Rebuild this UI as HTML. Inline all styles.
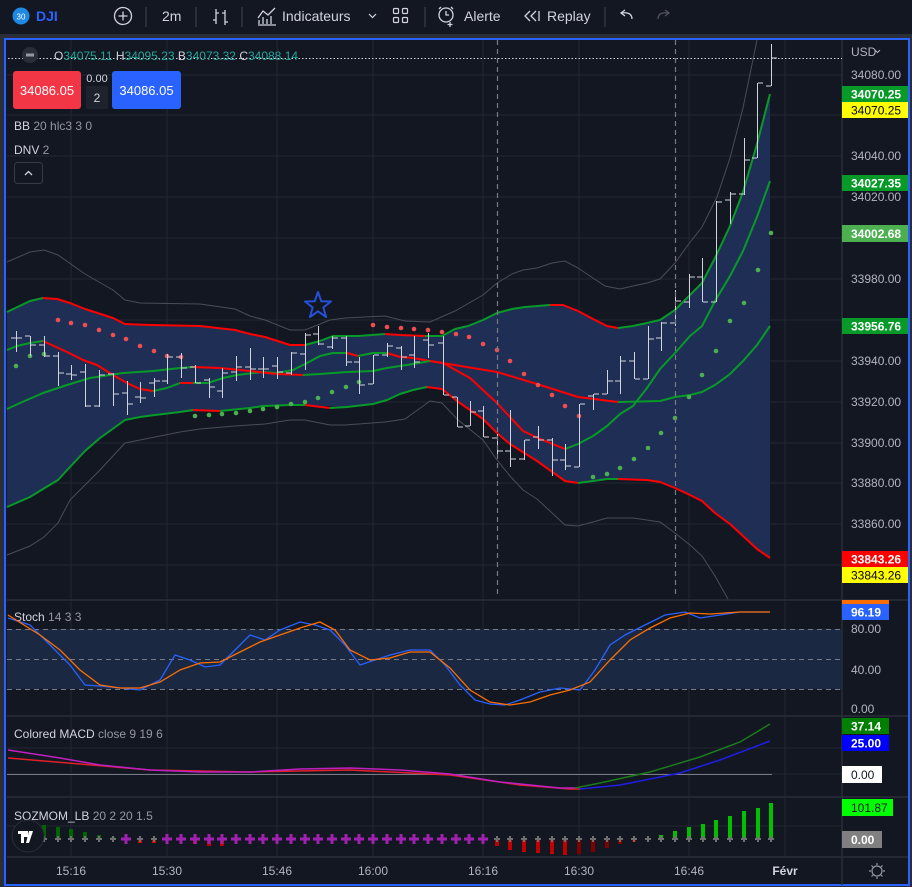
<!DOCTYPE html>
<html><head><meta charset="utf-8"><style>
html,body{margin:0;padding:0;background:#2a2e39;}
svg{display:block;font-family:"Liberation Sans",sans-serif;}
</style></head><body>
<svg width="912" height="887" viewBox="0 0 912 887" xmlns="http://www.w3.org/2000/svg">
<rect x="0" y="0" width="912" height="887" fill="#2a2e39"/>
<!-- toolbar -->
<rect x="0" y="0" width="912" height="34" fill="#131722"/>
<circle cx="21" cy="16" r="8.5" fill="#1e88e5"/>
<text x="21" y="19.5" font-size="8" fill="#fff" text-anchor="middle">30</text>
<text x="36" y="21" font-size="14" font-weight="bold" fill="#2962ff">DJI</text>
<circle cx="123" cy="16" r="8.5" fill="none" stroke="#d1d4dc" stroke-width="1.3"/>
<path d="M123 11.5V20.5M118.5 16H127.5" stroke="#d1d4dc" stroke-width="1.3"/>
<g stroke="#434651"><path d="M146 7V27M196 7V27M242 7V27M425 7V27M605 7V27"/></g>
<text x="162" y="21" font-size="14" fill="#d1d4dc">2m</text>
<path d="M216 9V24M216 13H219M216 20H213M225 10V25M225 13H222M225 22H228" stroke="#d1d4dc" stroke-width="1.3" fill="none"/>
<path d="M258 18L263 11L268 15L275 8M259 24V20M263 24V17M267 24V19M271 24V16M258 25H276" stroke="#d1d4dc" stroke-width="1.3" fill="none"/>
<text x="282" y="21" font-size="14" fill="#d1d4dc">Indicateurs</text>
<path d="M369 14L372.5 17.5L376 14" stroke="#d1d4dc" stroke-width="1.2" fill="none"/>
<g fill="none" stroke="#d1d4dc" stroke-width="1.2"><rect x="393.5" y="8.5" width="5" height="5" rx="1"/><rect x="402.5" y="8.5" width="5" height="5" rx="1"/><rect x="393.5" y="17.5" width="5" height="5" rx="1"/><rect x="402.5" y="17.5" width="5" height="5" rx="1"/></g>
<circle cx="446" cy="15" r="7" fill="none" stroke="#d1d4dc" stroke-width="1.3"/>
<path d="M446 11V15H449M439 9L441 7M453 9L451 7M450 22V27M447.5 24.5H452.5" stroke="#d1d4dc" stroke-width="1.3" fill="none"/>
<text x="464" y="21" font-size="14" fill="#d1d4dc">Alerte</text>
<path d="M530 11L525 16L530 21M536 11L531 16L536 21M539 11V21" stroke="#d1d4dc" stroke-width="1.3" fill="none"/>
<text x="547" y="21" font-size="14" fill="#d1d4dc">Replay</text>
<path d="M632 19C632 14 628 12 622 13M625 10L621 13L625 16" stroke="#d1d4dc" stroke-width="1.3" fill="none"/>
<path d="M658 19C658 14 662 12 668 13M665 10L669 13L665 16" stroke="#50535e" stroke-width="1.3" fill="none"/>

<!-- chart container -->
<rect x="5" y="39" width="904" height="846" fill="#131722" stroke="#2962ff" stroke-width="2"/>
<!-- grid -->
<g stroke="#232733" stroke-width="1">
<path d="M7 75H842M7 115H842M7 156H842M7 197H842M7 238H842M7 279H842M7 320H842M7 361H842M7 402H842M7 443H842M7 483H842M7 524H842M7 565H842"/>
<path d="M71 40V857M167 40V857M277 40V857M373 40V857M483 40V857M579 40V857M689 40V857M785 40V857"/>
<path d="M7 659H842M7 748H842M7 774H842M7 826H842"/>
</g>
<!-- pane separators -->
<g stroke="#2a2e39" stroke-width="1.5"><path d="M7 600H908M7 716H908M7 797H908M7 857H908M842 40V885"/></g>

<!-- fill -->
<path d="M7 312L30 301L43 298L57 299L70 303L85 309L113 318L125 324L150 325L200 326L235 330L250 334L265 337L290 345L305 345L320 341L333 336L358 336L385 334L430 336L442 336L455 329L468 326L483 320L497 313L512 309L525 307L550 305L563 305L578 311L593 319L607 326L618 328L633 326L647 323L660 320L675 310L690 295L702 283L715 258L730 226L743 192L757 144L770 94L770 558L757 549L743 536L730 524L715 513L702 501L690 495L675 488L660 482L647 480L618 479L593 481L578 483L565 481L537 461L510 444L497 433L483 419L457 401L442 389L430 388L413 390L400 394L387 400L373 404L347 407L305 405L263 406L220 411L180 412L140 417L125 420L100 438L85 451L70 467L58 480L43 489L30 497L7 507Z" fill="#1f2e55"/>
<!-- gray outer bands -->
<g fill="none" stroke="#4a4d56" stroke-width="1">
<path d="M7 262L30 252L44 250L58 255L85 274L113 290L125 300L140 303L200 304L235 309L250 316L265 320L290 330L305 330L330 320L345 318L385 316L405 321L430 322L455 311L483 295L497 283L512 274L523 270L537 268L552 263L565 261L578 268L593 278L605 286L620 289L633 286L647 283L660 279L675 263L688 245L702 227L717 197L730 158L743 108L757 40"/>
<path d="M7 555L30 546L44 537L58 523L70 500L85 485L100 470L125 443L140 440L165 435L180 432L200 429L235 426L265 424L290 420L305 420L330 425L345 425L385 422L405 419L430 401L442 403L457 419L483 440L497 460L510 476L523 490L537 499L550 511L565 525L578 526L593 522L607 518L633 518L660 522L675 533L690 545L702 556L715 576L728 599"/>
</g>
<!-- colored lines -->
<g fill="none" stroke-width="2" stroke-linejoin="round">
<!-- upper band -->
<path stroke="#089a28" d="M7 312L30 301L43 298"/>
<path stroke="#f00" d="M43 298L57 299L70 303L85 309L113 318L125 324L150 325L200 326L235 330L250 334L265 337L290 345L305 345"/>
<path stroke="#089a28" d="M305 345L320 341L333 336L358 336L385 334"/>
<path stroke="#f00" d="M385 334L400 335L425 336"/>
<path stroke="#089a28" d="M425 336L442 336L455 329L468 326L483 320L497 313L512 309L525 307L550 305"/>
<path stroke="#f00" d="M550 305L563 305L578 311L593 319L607 326L618 328"/>
<path stroke="#089a28" d="M618 328L633 326L647 323L660 320L675 310L690 295L702 283L715 258L730 226L743 192L757 144L770 94"/>
<!-- middle-upper -->
<path stroke="#089a28" d="M7 350L17 346L30 343L43 341"/>
<path stroke="#f00" d="M43 341L67 352L83 360L97 365L113 375L127 383L140 389L153 391"/>
<path stroke="#089a28" d="M153 391L167 388L180 383"/>
<path stroke="#f00" d="M180 383L193 383"/>
<path stroke="#089a28" d="M193 383L208 383L223 378L237 375L263 372L277 373L293 370L307 363L320 356L333 353L347 353"/>
<path stroke="#f00" d="M347 353L358 356"/>
<path stroke="#089a28" d="M358 356L373 353L387 353"/>
<path stroke="#f00" d="M387 353L400 357L413 358L430 361L443 363L470 378L497 403L523 431L538 438L565 449"/>
<path stroke="#089a28" d="M565 449L578 444L593 436L607 426L620 414L633 406L647 388L660 369L675 353L690 336L702 326L715 301L730 276L743 251L757 217L770 181"/>
<!-- basis -->
<path stroke="#089a28" d="M7 409L20 403L43 393L67 385L90 378L110 375L123 373L153 371L180 368L193 367"/>
<path stroke="#f00" d="M193 367L220 368L250 371L277 374L303 375"/>
<path stroke="#089a28" d="M303 375L320 374L347 372L373 371L387 368L400 366L413 364L430 361"/>
<path stroke="#f00" d="M430 361L497 372L537 384L578 397L618 402"/>
<path stroke="#089a28" d="M618 402L660 401L675 397L690 395L702 392L715 385L730 374L743 361L757 345L770 326"/>
<!-- lower -->
<path stroke="#089a28" d="M7 507L30 497L43 489L58 480L70 467L85 451L100 438L125 420L140 417L155 415L180 412L193 410"/>
<path stroke="#f00" d="M193 410L220 411"/>
<path stroke="#089a28" d="M220 411L250 408L263 406L290 405L305 405"/>
<path stroke="#f00" d="M305 405L330 408"/>
<path stroke="#089a28" d="M330 408L347 407L373 404L387 400L400 394L413 390L427 387"/>
<path stroke="#f00" d="M427 387L442 389L457 401L483 419L497 433L510 444L537 461L565 481L578 483"/>
<path stroke="#089a28" d="M578 483L593 481L607 479L618 479"/>
<path stroke="#f00" d="M618 479L647 480L660 482L675 488L690 495L702 501L715 513L730 524L743 536L757 549L770 558"/>
</g>
<!-- SAR dots -->
<g fill="#f04e4e">
<circle cx="58" cy="320" r="2.3"/><circle cx="71" cy="323" r="2.3"/><circle cx="85" cy="325" r="2.3"/><circle cx="99" cy="330" r="2.3"/><circle cx="113" cy="335" r="2.3"/><circle cx="126" cy="339" r="2.3"/><circle cx="140" cy="346" r="2.3"/><circle cx="154" cy="351" r="2.3"/><circle cx="167" cy="356" r="2.3"/><circle cx="181" cy="357" r="2.3"/>
<circle cx="373" cy="325" r="2.3"/><circle cx="387" cy="327" r="2.3"/><circle cx="401" cy="328" r="2.3"/><circle cx="414" cy="329" r="2.3"/><circle cx="428" cy="330" r="2.3"/><circle cx="442" cy="332" r="2.3"/><circle cx="456" cy="334" r="2.3"/><circle cx="469" cy="337" r="2.3"/><circle cx="483" cy="344" r="2.3"/><circle cx="497" cy="350" r="2.3"/><circle cx="510" cy="361" r="2.3"/><circle cx="524" cy="374" r="2.3"/><circle cx="538" cy="385" r="2.3"/><circle cx="552" cy="395" r="2.3"/><circle cx="565" cy="406" r="2.3"/><circle cx="579" cy="416" r="2.3"/>
</g>
<g fill="#4caf50">
<circle cx="16" cy="366" r="2.3"/><circle cx="30" cy="356" r="2.3"/><circle cx="44" cy="354" r="2.3"/>
<circle cx="195" cy="416" r="2.3"/><circle cx="209" cy="415" r="2.3"/><circle cx="222" cy="414" r="2.3"/><circle cx="236" cy="413" r="2.3"/><circle cx="250" cy="411" r="2.3"/><circle cx="263" cy="409" r="2.3"/><circle cx="277" cy="407" r="2.3"/><circle cx="291" cy="404" r="2.3"/><circle cx="305" cy="402" r="2.3"/><circle cx="318" cy="398" r="2.3"/><circle cx="332" cy="392" r="2.3"/><circle cx="346" cy="387" r="2.3"/><circle cx="359" cy="382" r="2.3"/>
<circle cx="593" cy="477" r="2.3"/><circle cx="607" cy="474" r="2.3"/><circle cx="620" cy="468" r="2.3"/><circle cx="634" cy="459" r="2.3"/><circle cx="648" cy="448" r="2.3"/><circle cx="661" cy="433" r="2.3"/><circle cx="675" cy="418" r="2.3"/><circle cx="689" cy="397" r="2.3"/><circle cx="702" cy="375" r="2.3"/><circle cx="716" cy="351" r="2.3"/><circle cx="730" cy="321" r="2.3"/><circle cx="744" cy="303" r="2.3"/><circle cx="758" cy="270" r="2.3"/><circle cx="771" cy="233" r="2.3"/>
</g>
<!-- OHLC bars -->
<path fill="none" stroke="#d1d4dc" stroke-width="1" d="
M16.5 331V352M11 338H16M17 338H22
M30.5 336V356M25 336H30M31 345H36
M44.5 336V357M39 345H44M45 356H50
M58.5 352V386M53 356H58M59 373H64
M71.5 365V380M66 374H71M72 375H77
M85.5 364V407M80 372H85M86 406H91
M99.5 370V407M94 406H99M100 375H105
M113.5 373V406M108 374H113M114 394H119
M127.5 381V415M122 393H127M128 404H133
M140.5 382V403M135 397H140M141 398H146
M154.5 378V397M149 383H154M155 381H160
M167.5 354V384M162 381H167M168 357H173
M181.5 353V378M176 357H181M182 368H187
M195.5 365V383M190 367H195M196 383H201
M209.5 378V398M204 380H209M210 387H215
M222.5 368V398M217 391H222M223 373H228
M236.5 356V381M231 372H236M237 367H242
M250.5 348V380M245 367H250M251 369H256
M263.5 357V378M258 369H263M264 369H269
M277.5 357V379M272 366H277M278 372H283
M291.5 352V375M286 373H291M292 353H297
M305.5 333V370M300 354H305M306 335H311
M318.5 326V345M313 334H318M319 344H324
M332.5 336V349M327 347H332M333 338H338
M346.5 336V366M341 338H346M347 362H352
M359.5 357V394M354 362H359M360 385H365
M373.5 355V384M368 384H373M374 355H379
M387.5 343V357M382 355H387M388 346H393
M401.5 346V370M396 348H401M402 357H407
M414.5 336V368M409 355H414M415 362H420
M428.5 333V358M423 340H428M429 345H434
M443.5 336V395M438 343H443M444 395H449
M457.5 397V427M452 397H457M458 427H463
M470.5 401V426M465 426H470M471 412H476
M483.5 406V437M478 411H483M484 437H489
M497.5 434V456M492 438H497M498 451H503
M510.5 410V467M505 451H510M511 459H516
M524.5 440V460M519 459H524M525 440H530
M538.5 426V449M533 437H538M539 440H544
M552.5 438V476M547 440H552M553 460H558
M565.5 444V470M560 460H565M566 466H571
M579.5 404V467M574 467H579M580 404H585
M593.5 394V410M588 396H593M594 394H599
M607.5 370V394M602 394H607M608 381H613
M620.5 356V394M615 381H620M621 361H626
M634.5 352V379M629 361H634M635 379H640
M648.5 326V379M643 379H648M649 339H654
M661.5 322V351M656 338H661M662 323H667
M675.5 290V326M670 323H675M676 301H681
M689.5 274V308M684 302H689M690 277H695
M702.5 258V302M697 277H702M703 302H708
M716.5 201V302M711 302H716M717 202H722
M730.5 192V224M725 200H730M731 194H736
M744.5 138V195M739 194H744M745 160H750
M757.5 83V158M752 158H757M758 83H763
M771.5 44V86M766 86H771M772 58H777"/>
<!-- dashed verticals -->
<path d="M497.5 40V597M675.5 40V597" stroke="#787b86" stroke-width="1.2" stroke-dasharray="5,4"/>
<!-- dotted crosshair -->
<path d="M8 58.5H842" stroke="#d1d4dc" stroke-width="1" stroke-dasharray="1.5,2"/>
<!-- star -->
<path d="M318 292L321.3 301.3L331 301.5L323.3 307.5L326.1 317L318 311.3L309.9 317L312.7 307.5L305 301.5L314.7 301.3Z" fill="none" stroke="#2451d6" stroke-width="2" stroke-linejoin="round"/>

<!-- header legend -->
<circle cx="30" cy="55" r="8" fill="#2a2e39"/>
<rect x="26" y="53.5" width="8" height="3" fill="#9598a1"/>
<text y="60" font-size="12"><tspan x="54" fill="#d1d4dc">O</tspan><tspan fill="#26a69a">34075.11</tspan><tspan fill="#d1d4dc"> H</tspan><tspan fill="#26a69a">34095.23</tspan><tspan fill="#d1d4dc"> B</tspan><tspan fill="#26a69a">34073.32</tspan><tspan fill="#d1d4dc"> C</tspan><tspan fill="#26a69a">34088.14</tspan></text>
<rect x="13" y="71" width="68" height="38" rx="3" fill="#f23645"/>
<text x="47" y="95" font-size="13" fill="#fff" text-anchor="middle">34086.05</text>
<text x="97" y="82" font-size="11" fill="#d1d4dc" text-anchor="middle">0.00</text>
<rect x="86" y="86" width="22" height="23" rx="2" fill="#1e222d"/>
<text x="97" y="102" font-size="12" fill="#d1d4dc" text-anchor="middle">2</text>
<rect x="112" y="71" width="69" height="38" rx="3" fill="#2962ff"/>
<text x="146.5" y="95" font-size="13" fill="#fff" text-anchor="middle">34086.05</text>
<text x="14" y="130" font-size="12" fill="#d1d4dc">BB <tspan fill="#9598a1">20 hlc3 3 0</tspan></text>
<text x="14" y="154" font-size="12" fill="#d1d4dc">DNV <tspan fill="#9598a1">2</tspan></text>
<rect x="14.5" y="162.5" width="28" height="21" rx="3" fill="#131722" stroke="#363a45"/>
<path d="M25 175L28.5 171.5L32 175" stroke="#d1d4dc" stroke-width="1.3" fill="none"/>

<!-- price axis -->
<g font-size="12" fill="#b2b5be">
<text x="851" y="56">USD</text>
<path d="M875 50L877.5 52.5L880 50" stroke="#b2b5be" fill="none"/>
<text x="851" y="79">34080.00</text>
<text x="851" y="160">34040.00</text>
<text x="851" y="201">34020.00</text>
<text x="851" y="283">33980.00</text>
<text x="851" y="365">33940.00</text>
<text x="851" y="406">33920.00</text>
<text x="851" y="447">33900.00</text>
<text x="851" y="487">33880.00</text>
<text x="851" y="528">33860.00</text>
</g>
<rect x="842" y="86" width="66" height="16" fill="#089a28"/><text x="851" y="98.5" font-size="12" font-weight="bold" fill="#fff">34070.25</text>
<rect x="842" y="102" width="66" height="16" fill="#ffff00"/><text x="851" y="114.5" font-size="12" fill="#000">34070.25</text>
<rect x="842" y="175" width="66" height="16" fill="#089a28"/><text x="851" y="187.5" font-size="12" font-weight="bold" fill="#fff">34027.35</text>
<rect x="842" y="225" width="66" height="17" fill="#4caf50"/><text x="851" y="238" font-size="12" font-weight="bold" fill="#fff">34002.68</text>
<rect x="842" y="318" width="66" height="16" fill="#089a28"/><text x="851" y="330.5" font-size="12" font-weight="bold" fill="#fff">33956.76</text>
<rect x="842" y="551" width="66" height="16" fill="#ff0000"/><text x="851" y="563.5" font-size="12" font-weight="bold" fill="#fff">33843.26</text>
<rect x="842" y="567" width="66" height="16" fill="#ffff00"/><text x="851" y="579.5" font-size="12" fill="#000">33843.26</text>

<!-- Stoch pane -->
<rect x="7" y="629" width="835" height="60" fill="#1c2a45" opacity="0.9"/>
<path d="M7 629.5H842M7 659.5H842M7 689.5H842" stroke="#787b86" stroke-dasharray="5,4"/>
<text x="14" y="621" font-size="12" fill="#d1d4dc">Stoch <tspan fill="#9598a1">14 3 3</tspan></text>
<path fill="none" stroke="#2962ff" stroke-width="1.3" d="M8 618L30 625L50 645L70 665L85 685L100 686L120 688L140 690L160 680L175 655L190 660L205 667L220 665L235 650L250 635L265 640L280 630L300 622L315 625L330 630L345 645L360 665L375 660L390 655L410 650L430 650L445 665L460 685L475 700L490 704L505 705L520 700L540 692L560 688L580 690L595 670L610 645L625 635L645 625L665 615L685 612L700 618L720 615L740 612L770 612"/>
<path fill="none" stroke="#ff6d00" stroke-width="1.3" d="M8 615L40 635L60 650L80 670L100 685L120 688L140 688L160 682L180 670L200 663L220 662L240 652L260 642L280 635L300 628L320 622L335 630L350 650L370 660L390 658L410 652L430 652L450 668L470 690L490 702L510 705L530 702L550 695L570 690L590 682L610 660L630 640L650 628L670 618L690 613L710 614L740 612L770 612"/>
<rect x="842" y="600" width="47" height="4" fill="#ff6d00"/>
<rect x="842" y="604" width="47" height="16" fill="#2962ff"/><text x="851" y="616.5" font-size="12" font-weight="bold" fill="#fff">96.19</text>
<g font-size="12" fill="#b2b5be"><text x="851" y="633">80.00</text><text x="851" y="674">40.00</text><text x="851" y="713">0.00</text></g>

<!-- MACD pane -->
<text x="14" y="738" font-size="12" fill="#d1d4dc">Colored MACD <tspan fill="#9598a1">close 9 19 6</tspan></text>
<path d="M7 774.5H772" stroke="#787b86"/>
<path fill="none" stroke="#e0202a" stroke-width="1.5" d="M8 758L80 764L150 770L250 772L350 770L450 775L520 785L570 789L580 789"/>
<path fill="none" stroke="#1e1ee6" stroke-width="1.5" d="M580 789L620 785L680 773L720 760L770 741"/>
<path fill="none" stroke="#c020c0" stroke-width="1.5" d="M8 750L60 758L100 765L150 770L200 772L250 772L300 769L350 768L400 770L450 774L500 782L560 788L575 788"/>
<path fill="none" stroke="#1b7a1b" stroke-width="1.5" d="M575 788L600 783L650 772L700 757L740 742L770 724"/>
<rect x="842" y="718" width="47" height="16" fill="#008000"/><text x="851" y="730.5" font-size="12" font-weight="bold" fill="#fff">37.14</text>
<rect x="842" y="735" width="47" height="16" fill="#0000ff"/><text x="851" y="747.5" font-size="12" font-weight="bold" fill="#fff">25.00</text>
<rect x="842" y="766" width="40" height="17" fill="#fff"/><text x="851" y="779" font-size="12" fill="#131722">0.00</text>

<!-- SQZ pane -->
<text x="14" y="820" font-size="12" fill="#d1d4dc">SQZMOM_LB <tspan fill="#9598a1">20 2 20 1.5</tspan></text>
<g fill="#006400">
<rect x="42" y="825" width="4" height="14"/><rect x="56" y="827" width="4" height="12"/><rect x="69" y="829" width="4" height="10"/><rect x="83" y="832" width="4" height="7"/><rect x="97" y="835" width="4" height="4"/><rect x="111" y="837" width="4" height="2"/>
</g>
<g fill="#c00000"><rect x="138" y="839" width="4" height="4"/><rect x="152" y="839" width="4" height="4"/><rect x="193" y="839" width="4" height="5"/><rect x="207" y="839" width="4" height="7"/><rect x="220" y="839" width="4" height="7"/>
<rect x="495" y="839" width="4" height="7"/><rect x="508" y="839" width="4" height="11"/><rect x="522" y="839" width="4" height="13"/><rect x="536" y="839" width="4" height="14"/><rect x="550" y="839" width="4" height="15"/><rect x="563" y="839" width="4" height="16"/></g>
<g fill="#800000"><rect x="577" y="839" width="4" height="15"/><rect x="591" y="839" width="4" height="13"/><rect x="605" y="839" width="4" height="9"/><rect x="618" y="839" width="4" height="5"/><rect x="632" y="839" width="4" height="3"/></g>
<g fill="#00c000"><rect x="659" y="835" width="4" height="4"/><rect x="673" y="831" width="4" height="8"/><rect x="687" y="827" width="4" height="12"/><rect x="701" y="824" width="4" height="15"/><rect x="714" y="820" width="4" height="19"/><rect x="728" y="816" width="4" height="23"/><rect x="742" y="811" width="4" height="28"/><rect x="756" y="808" width="4" height="31"/><rect x="769" y="803" width="4" height="36"/></g>
<path stroke="#707070" stroke-width="2" d="M44 836V842M41 839H47M58 836V842M55 839H61M71 836V842M68 839H74M85 836V842M82 839H88M99 836V842M96 839H102M113 836V842M110 839H116M140 836V842M137 839H143M154 836V842M151 839H157M497 836V842M494 839H500M510 836V842M507 839H513M524 836V842M521 839H527M538 836V842M535 839H541M552 836V842M549 839H555M565 836V842M562 839H568M579 836V842M576 839H582M593 836V842M590 839H596M607 836V842M604 839H610M620 836V842M617 839H623M634 836V842M631 839H637M648 836V842M645 839H651M661 836V842M658 839H664M675 836V842M672 839H678M689 836V842M686 839H692M703 836V842M700 839H706M716 836V842M713 839H719M730 836V842M727 839H733M744 836V842M741 839H747M758 836V842M755 839H761M771 836V842M768 839H774"/>
<path stroke="#a020b0" stroke-width="3" d="
M126 834V844M121 839H131M167 834V844M162 839H172M181 834V844M176 839H186M195 834V844M190 839H200M209 834V844M204 839H214M222 834V844M217 839H227M236 834V844M231 839H241M250 834V844M245 839H255M263 834V844M258 839H268M277 834V844M272 839H282M291 834V844M286 839H296M305 834V844M300 839H310M318 834V844M313 839H323M332 834V844M327 839H337M346 834V844M341 839H351M359 834V844M354 839H364M373 834V844M368 839H378M387 834V844M382 839H392M401 834V844M396 839H406M414 834V844M409 839H419M428 834V844M423 839H433M442 834V844M437 839H447M456 834V844M451 839H461M469 834V844M464 839H474M483 834V844M478 839H488"/>
<rect x="842" y="799" width="51" height="17" fill="#00ff00"/><text x="851" y="812" font-size="12" fill="#131722">101.87</text>
<rect x="842" y="831" width="40" height="17" fill="#808080"/><text x="851" y="844" font-size="12" font-weight="bold" fill="#fff">0.00</text>
<!-- TV logo -->
<circle cx="28" cy="836" r="16" fill="#131722" stroke="#2a2e39"/>
<path d="M18 831H28V837H24V843H21V834H18Z M29 831H33L29 843H26Z" fill="#fff"/>
<circle cx="30.5" cy="833" r="1.8" fill="#fff"/>

<!-- time axis -->
<g font-size="12" fill="#b2b5be" text-anchor="middle">
<text x="71" y="875">15:16</text><text x="167" y="875">15:30</text><text x="277" y="875">15:46</text><text x="373" y="875">16:00</text><text x="483" y="875">16:16</text><text x="579" y="875">16:30</text><text x="689" y="875">16:46</text><text x="785" y="875" font-weight="bold" fill="#d1d4dc">Févr</text>
</g>
<circle cx="877" cy="871" r="5" fill="none" stroke="#9598a1" stroke-width="1.2"/>
<path d="M877 863V865M877 877V879M869 871H871M883 871H885M871.5 865.5L873 867M881 875L882.5 876.5M882.5 865.5L881 867M873 875L871.5 876.5" stroke="#9598a1" stroke-width="1.2"/>
</svg>
</body></html>
